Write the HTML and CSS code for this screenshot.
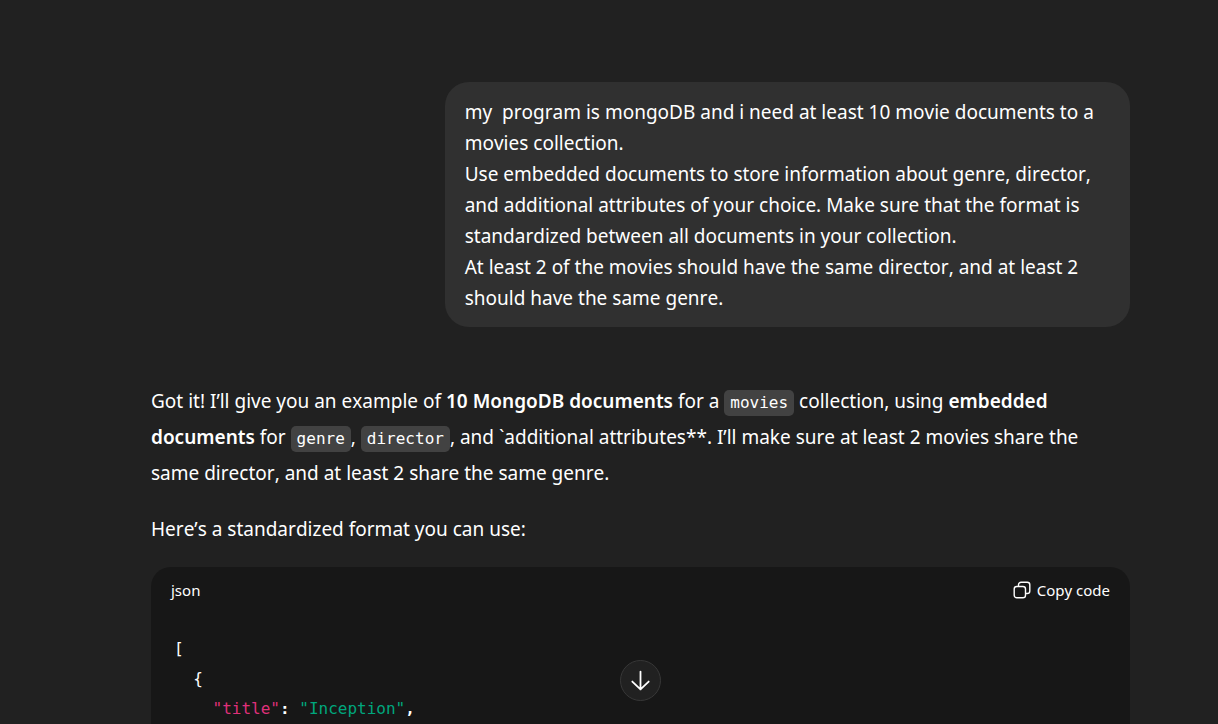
FILE: index.html
```html
<!DOCTYPE html>
<html lang="en">
<head>
<meta charset="utf-8">
<meta name="viewport" content="width=device-width, initial-scale=1">
<title>Chat</title>
<link rel="stylesheet" href="styles.css">
</head>
<body>
<main class="thread">
  <article class="user-message">my&nbsp; program is mongoDB and i need at least 10 movie documents to a movies collection.
Use embedded documents to store information about genre, director, and additional attributes of your choice. Make sure that the format is standardized between all documents in your collection.
At least 2 of the movies should have the same director, and at least 2 should have the same genre.</article>
  <article class="reply">
    <p>Got it! I’ll give you an example of <strong>10 MongoDB documents</strong> for a <code>movies</code> collection, using <strong>embedded documents</strong> for <code>genre</code>, <code>director</code>, and `additional attributes**. I’ll make sure at least 2 movies share the same director, and at least 2 share the same genre.</p>
    <p>Here’s a standardized format you can use:</p>
    <section class="code-block">
      <header class="code-header">
        <span>json</span>
        <button class="copy" type="button">
          <svg width="18" height="18" viewBox="0 0 18 18" fill="none" stroke="currentColor" stroke-width="1.4" aria-hidden="true"><rect x="1.2" y="5.5" width="11.3" height="11.3" rx="2.6"/><path d="M5.5 5.3V3.8a2.6 2.6 0 0 1 2.6-2.6h6.1a2.6 2.6 0 0 1 2.6 2.6v6.1a2.6 2.6 0 0 1-2.6 2.6h-1.5"/></svg>
          Copy code
        </button>
      </header>
      <pre class="code">[
  {
    <span class="key">"title"</span><b>:</b> <span class="string">"Inception"</span><b>,</b></pre>
    </section>
  </article>
</main>
<button class="scroll-down" type="button" aria-label="Scroll to bottom">
  <svg width="21" height="21" viewBox="0 0 20 20" fill="none" stroke="currentColor" stroke-width="1.7" stroke-linecap="round" stroke-linejoin="round" aria-hidden="true"><path d="M10 1.5v17M2.2 11l7.8 7.5 7.8-7.5"/></svg>
</button>
</body>
</html>
```
FILE: styles.css
```css
* { box-sizing: border-box; }
body {
  margin: 0;
  height: 100vh;
  overflow: hidden;
  background: #212121;
  color: #fff;
  font: 19px/31px "Noto Sans", sans-serif;
  font-kerning: none;
}
.thread {
  display: flex;
  flex-direction: column;
  gap: 56px;
  min-height: 100vh;
  padding: 82px 88px 0 151px;
}
.user-message {
  align-self: flex-end;
  max-width: 70%;
  padding: 15px 20px 13px;
  border-radius: 24px;
  background: #303030;
  white-space: pre-wrap;
}
.reply {
  display: flex;
  flex: 1;
  flex-direction: column;
  gap: 20px;
  line-height: 36px;
}
.reply p { margin: 0; }
.reply strong { font-weight: 600; }
.reply p code {
  padding: 3px 6px 4px;
  border-radius: 5px;
  background: #424242;
  font: 16px/20px "DejaVu Sans Mono", monospace;
}
.code-block {
  flex: 1;
  border-radius: 20px 20px 0 0;
  background: #171717;
}
.code-header {
  display: flex;
  align-items: center;
  justify-content: space-between;
  padding: 8px 20px;
  font-size: 15px;
  line-height: 30px;
}
.copy {
  display: flex;
  align-items: center;
  gap: 6px;
  padding: 0;
  border: 0;
  background: none;
  color: inherit;
  font: inherit;
}
.code {
  margin: 0;
  padding: 21px 23px 0;
  font: 16px/30px "DejaVu Sans Mono", monospace;
}
.key { color: #df3079; }
.string { color: #00a67d; }
.scroll-down {
  position: fixed;
  bottom: 23px;
  left: calc(50% + 11px);
  display: grid;
  place-items: center;
  width: 41px;
  height: 41px;
  padding: 0;
  border: 1px solid #383838;
  border-radius: 50%;
  background: #212121;
  color: #fff;
}
```
